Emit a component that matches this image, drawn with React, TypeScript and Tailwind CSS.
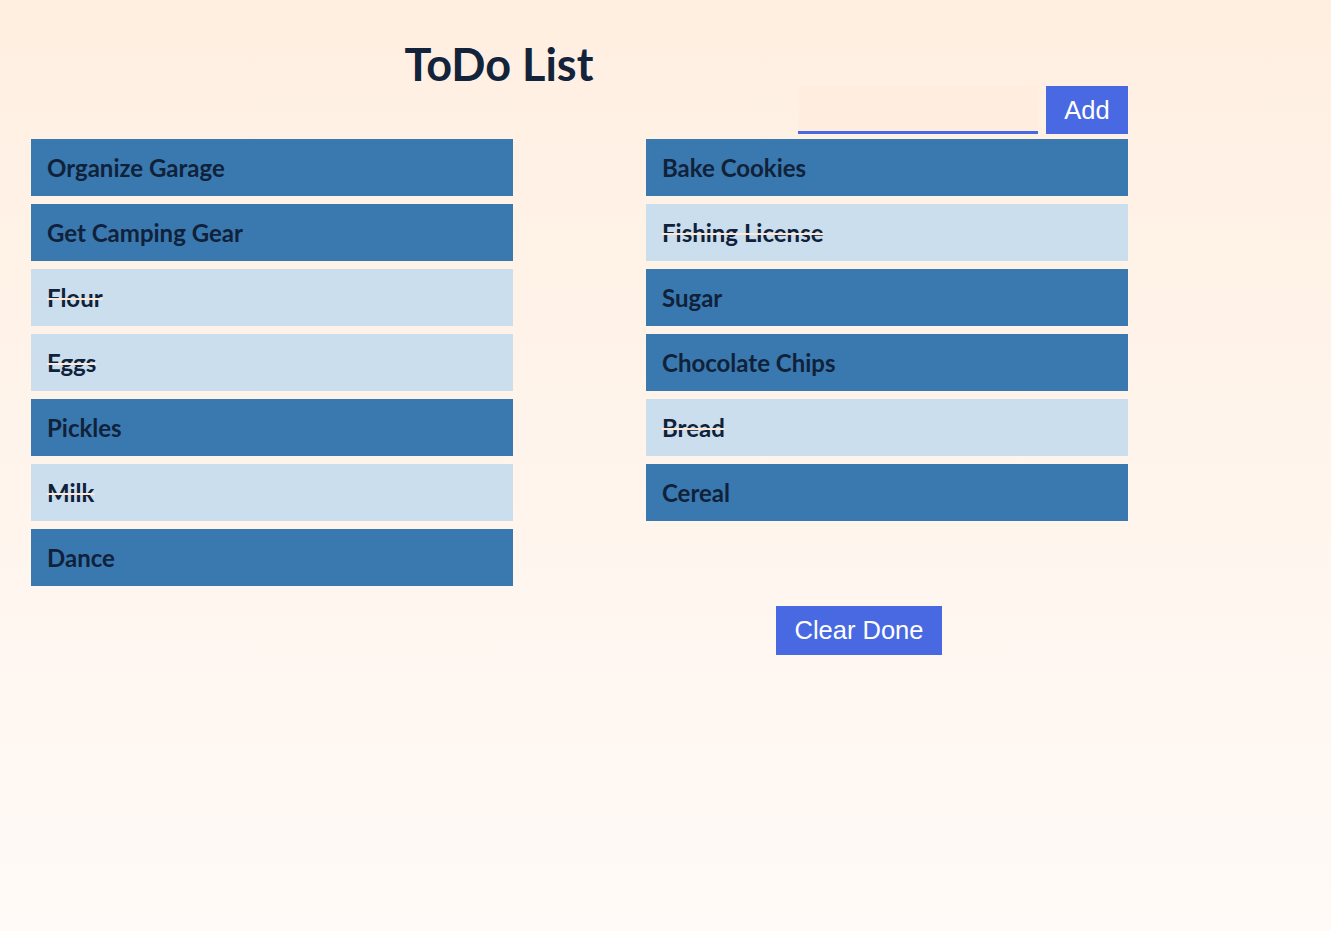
const left = [
  { text: 'Organize Garage', done: false },
  { text: 'Get Camping Gear', done: false },
  { text: 'Flour', done: true },
  { text: 'Eggs', done: true },
  { text: 'Pickles', done: false },
  { text: 'Milk', done: true },
  { text: 'Dance', done: false },
];

const right = [
  { text: 'Bake Cookies', done: false },
  { text: 'Fishing License', done: true },
  { text: 'Sugar', done: false },
  { text: 'Chocolate Chips', done: false },
  { text: 'Bread', done: true },
  { text: 'Cereal', done: false },
];

type Item = { text: string; done: boolean };

const Row = ({ item }: { item: Item }) => (
  <li
    className={`h-[57px] flex items-center px-4 text-[24px] font-bold text-[#10223a] ${
      item.done ? 'bg-[#cadeed] line-through decoration-[#fbe8d8] decoration-2' : 'bg-[#3a78b0]'
    }`}
  >
    {item.text}
  </li>
);

export default function App() {
  return (
    <div className="min-h-[931px] w-full bg-gradient-to-b from-[#ffefe1] to-[#fffaf7] font-['Lato',sans-serif]">
      <div className="pt-[36px] pl-[31px] w-[1128px]">
        <h1 className="text-[45px] font-bold text-[#12233a] leading-[56px] text-center w-[936px]">
          ToDo List
        </h1>
        <div className="flex justify-end gap-2 -mt-[6px] h-[48px]">
          <input
            className="w-[240px] h-[48px] bg-[#ffeddf] border-b-[3px] border-[#4869e1] outline-none"
            type="text"
          />
          <button className="w-[82px] h-[48px] bg-[#4869e1] text-white text-[25.5px] font-['Liberation_Sans',Arial,sans-serif]">
            Add
          </button>
        </div>
        <div className="flex gap-[133px] mt-[5px]">
          <ul className="w-[482px] flex flex-col gap-2">
            {left.map((item, i) => (
              <Row key={i} item={item} />
            ))}
          </ul>
          <ul className="w-[482px] flex flex-col gap-2">
            {right.map((item, i) => (
              <Row key={i} item={item} />
            ))}
          </ul>
        </div>
        <div className="flex justify-end pr-[186px] mt-[20px]">
          <button className="w-[166px] h-[49px] bg-[#4869e1] text-white text-[25.5px] font-['Liberation_Sans',Arial,sans-serif]">
            Clear Done
          </button>
        </div>
      </div>
    </div>
  );
}
